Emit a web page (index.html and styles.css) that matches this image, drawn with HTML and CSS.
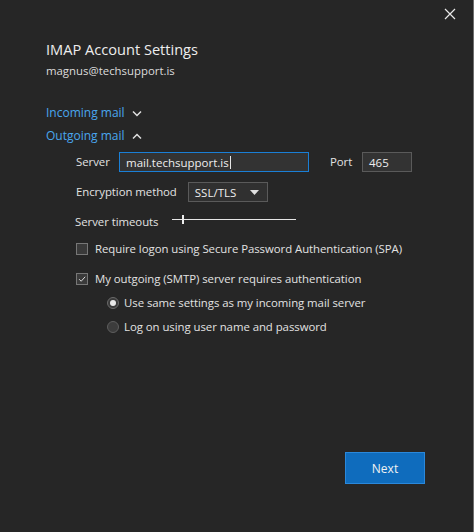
FILE: index.html
```html
<!DOCTYPE html>
<html>
<head>
<meta charset="utf-8">
<link rel="stylesheet" href="styles.css">
</head>
<body>
<div class="window">
  <div class="topbar">
    <svg class="close" width="12" height="12" viewBox="0 0 12 12"><path d="M1 1 L11 11 M11 1 L1 11" stroke="#e8e8e8" stroke-width="1.2" fill="none"/></svg>
  </div>
  <div class="content">
    <div class="title">IMAP Account Settings</div>
    <div class="email">magnus@techsupport.is</div>

    <div class="section-link incoming">Incoming mail
      <svg class="chev" width="10" height="7" viewBox="0 0 10 7"><path d="M1 1.5 L5 5.5 L9 1.5" stroke="#e0e0e0" stroke-width="1.5" fill="none"/></svg>
    </div>
    <div class="section-link outgoing">Outgoing mail
      <svg class="chev" width="10" height="7" viewBox="0 0 10 7"><path d="M1 5.5 L5 1.5 L9 5.5" stroke="#e0e0e0" stroke-width="1.5" fill="none"/></svg>
    </div>

    <div class="panel">
      <div class="row server-row">
        <span class="label server-label">Server</span>
        <div class="input active"><span>mail.techsupport.is</span><span class="caret"></span></div>
        <span class="label port-label">Port</span>
        <div class="input port"><span>465</span></div>
      </div>
      <div class="row enc-row">
        <span class="label">Encryption method</span>
        <div class="select"><span>SSL/TLS</span><svg width="9" height="5" viewBox="0 0 9 5"><path d="M0 0 L9 0 L4.5 5 Z" fill="#e0e0e0"/></svg></div>
      </div>
      <div class="row slider-row">
        <span class="label">Server timeouts</span>
        <div class="slider"><div class="track"></div><div class="thumb"></div></div>
      </div>
      <div class="row check-row first">
        <span class="checkbox"></span>
        <span class="label">Require logon using Secure Password Authentication (SPA)</span>
      </div>
      <div class="row check-row">
        <span class="checkbox checked"><svg width="12" height="12" viewBox="0 0 12 12"><path d="M2.5 6.2 L5 8.7 L9.8 3.3" stroke="#d8d8d8" stroke-width="1.2" fill="none"/></svg></span>
        <span class="label">My outgoing (SMTP) server requires authentication</span>
      </div>
      <div class="radios">
        <div class="row radio-row">
          <span class="radio on"><span class="dot"></span></span>
          <span class="label">Use same settings as my incoming mail server</span>
        </div>
        <div class="row radio-row">
          <span class="radio"></span>
          <span class="label">Log on using user name and password</span>
        </div>
      </div>
    </div>
  </div>
  <div class="footer">
    <button class="next">Next</button>
  </div>
</div>
</body>
</html>
```
FILE: styles.css
```css
html, body {
  margin: 0;
  padding: 0;
  background: #262626;
}
body {
  width: 474px;
  height: 532px;
  overflow: hidden;
  font-family: "Open Sans", "Noto Sans", sans-serif;
  color: #e6e6e6;
}
.window {
  width: 473px;
  height: 532px;
  border-right: 1px solid #6f6f6f;
  display: flex;
  flex-direction: column;
}
.topbar {
  height: 28px;
  display: flex;
  justify-content: flex-end;
  align-items: flex-start;
  padding-right: 17px;
}
.close {
  margin-top: 8px;
}
.content {
  padding-left: 46px;
  display: flex;
  flex-direction: column;
  flex: 1;
}
.title {
  font-size: 14.6px;
  line-height: 20px;
  margin-top: 11px;
  color: #ededed;
}
.email {
  font-size: 11.4px;
  line-height: 16px;
  margin-top: 4px;
  color: #dcdcdc;
}
.section-link {
  font-size: 12px;
  line-height: 16px;
  color: #4aa6ee;
  display: flex;
  align-items: center;
}
.section-link .chev {
  margin-left: 7px;
}
.incoming {
  margin-top: 26px;
}
.outgoing {
  margin-top: 7px;
}
.panel {
  padding-left: 30px;
  display: flex;
  flex-direction: column;
}
.row {
  display: flex;
  align-items: center;
}
.label {
  font-size: 11.4px;
  line-height: 16px;
  color: #e2e2e2;
  white-space: nowrap;
  letter-spacing: -0.05px;
}
.server-row {
  margin-top: 8px;
  height: 20px;
}
.server-label {
  width: 43px;
}
.input {
  box-sizing: border-box;
  height: 20px;
  border: 1px solid #5a5a5a;
  background: #333333;
  display: flex;
  align-items: center;
  padding-left: 6px;
  font-size: 11.5px;
  color: #eeeeee;
}
.input.active {
  width: 190px;
  border-color: #1a7fd6;
}
.caret {
  display: inline-block;
  width: 1px;
  height: 13px;
  background: #e6e6e6;
  margin-left: 1px;
}
.port-label {
  margin-left: 21px;
  width: 32px;
}
.input.port {
  width: 50px;
}
.enc-row {
  margin-top: 10px;
  height: 20px;
}
.select {
  box-sizing: border-box;
  margin-left: 11px;
  width: 80px;
  height: 20px;
  border: 1px solid #5a5a5a;
  background: #303030;
  display: flex;
  align-items: center;
  justify-content: space-between;
  padding: 0 8px 0 6px;
  font-size: 11.5px;
  color: #eeeeee;
}
.slider-row {
  margin-top: 12px;
  height: 16px;
  margin-left: -1px;
}
.slider {
  position: relative;
  margin-left: 14px;
  width: 124px;
  height: 10px;
  margin-top: -5px;
}
.track {
  position: absolute;
  left: 0;
  right: 0;
  top: 4px;
  height: 1px;
  background: #e6e6e6;
}
.thumb {
  position: absolute;
  left: 10px;
  top: 0;
  width: 2px;
  height: 9px;
  background: #ececec;
}
.check-row {
  height: 16px;
  gap: 7px;
}
.check-row.first {
  margin-top: 11px;
}
.check-row + .check-row {
  margin-top: 14px;
}
.checkbox {
  box-sizing: border-box;
  width: 12px;
  height: 12px;
  border: 1px solid #777;
  background: #3a3a3a;
  display: flex;
  align-items: center;
  justify-content: center;
}
.checkbox svg {
  display: block;
}
.radios {
  padding-left: 31px;
  display: flex;
  flex-direction: column;
  margin-top: 8px;
}
.radio-row {
  height: 16px;
  gap: 5px;
}
.radio-row + .radio-row {
  margin-top: 8px;
}
.radio {
  box-sizing: border-box;
  width: 12px;
  height: 12px;
  border-radius: 50%;
  border: 1px solid #5e5e5e;
  background: #3c3c3c;
  display: flex;
  align-items: center;
  justify-content: center;
}
.radio.on {
  border-color: #6a6a6a;
  background: #3a3a3a;
}
.radio .dot {
  width: 6px;
  height: 6px;
  border-radius: 50%;
  background: #e8e8e8;
}
.footer {
  display: flex;
  justify-content: flex-end;
  padding: 0 48px 48px 0;
}
.next {
  width: 80px;
  height: 32px;
  box-sizing: border-box;
  background: #0f6cbd;
  border: 1px solid #2a88db;
  color: #f2f2f2;
  font-family: "Open Sans", "Noto Sans", sans-serif;
  font-size: 12px;
  padding: 0;
}
```
